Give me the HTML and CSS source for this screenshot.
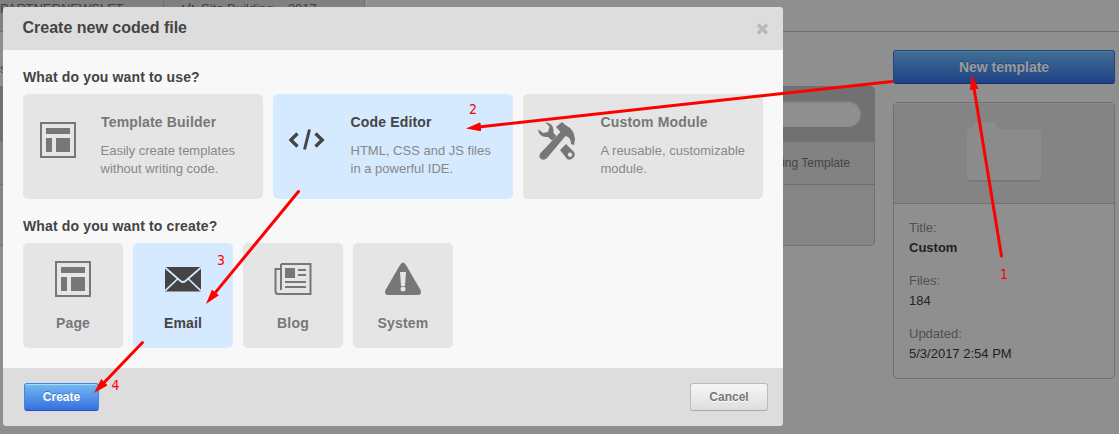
FILE: index.html
```html
<!DOCTYPE html>
<html lang="en">
<head>
<meta charset="utf-8">
<title>Create new coded file</title>
<link rel="stylesheet" href="styles.css">
</head>
<body>
<div class="page">
  <div class="tabbar">
    <div class="tab tab-first">PARTNERNEWSLET</div>
    <div class="tab"><svg width="16" height="12" viewBox="0 0 16 12"><path d="M4 2 1 6l3 4M10 0 6 12M12 2l3 4-3 4" fill="none" stroke="#454545" stroke-width="1.5"/></svg>Site Building – 2017</div>
  </div>
  <div class="workspace">
    <main class="files">
      <div class="crumb">s</div>
      <div class="panel">
        <div class="panel-search"><div class="search"></div></div>
        <div class="panel-row">Existing Template</div>
        <div class="panel-rest"></div>
      </div>
    </main>
    <aside class="side">
      <button class="new-btn">New template</button>
      <div class="info">
        <div class="thumb">
          <svg width="78" height="62" viewBox="0 0 78 62"><path d="M2 10q0-2 2-2h3l4-7h18l5 7h40q2 0 2 2v48q0 2-2 2H4q-2 0-2-2z" fill="#797979"/><path d="M2 9q0-2 2-2h3l4-7h18l5 7h40q2 0 2 2v47q0 2-2 2H4q-2 0-2-2z" fill="#8b8b8b"/></svg>
        </div>
        <dl class="meta">
          <div><dt>Title:</dt><dd class="strong">Custom</dd></div>
          <div><dt>Files:</dt><dd>184</dd></div>
          <div><dt>Updated:</dt><dd>5/3/2017 2:54 PM</dd></div>
        </dl>
      </div>
    </aside>
  </div>
</div>

<section class="modal">
  <header class="modal-head">
    <h1>Create new coded file</h1>
    <svg class="close" width="13" height="14" viewBox="0 0 13 14"><path d="M2 2.500l9 9M11 2.500l-9 9" stroke="#b9b9b9" stroke-width="3.400"/></svg>
  </header>
  <div class="modal-body">
    <h2>What do you want to use?</h2>
    <div class="cards">
      <div class="card wide">
        <svg class="icon page-icon" width="36" height="36" viewBox="0 0 36 36"><path d="M1 1h34v34H1z" fill="none" stroke="#777" stroke-width="2"/><path d="M6 6h24v6H6zM6 16h6v14H6zM16 16h14v14H16z" fill="#777"/></svg>
        <div class="first"><h3>Template Builder</h3><p>Easily create templates<br>without writing code.</p></div>
      </div>
      <div class="card wide selected">
        <svg class="icon" width="36" height="36" viewBox="0 0 36 36"><path d="M8.500 11.500 1.800 18 8.500 24.500M26.500 11.500l6.700 6.500-6.700 6.500" fill="none" stroke="#444" stroke-width="3.400"/><path d="M20.500 7.500 15.500 27.500" stroke="#444" stroke-width="3"/></svg>
        <div><h3>Code Editor</h3><p>HTML, CSS and JS files<br>in a powerful IDE.</p></div>
      </div>
      <div class="card wide">
        <svg class="icon tools" width="38" height="38" viewBox="0 0 38 38"><g fill="#777"><path d="M7 0Q15 1 15.500 8v3l3 3-4.500 4.500-4-3.500Q1 16 0 7l5 4 5-1 1.500-5.500z"/><path fill-rule="evenodd" d="M28 22l8 8q2 3-1 6t-6 1l-7-9zM32 30.500a2.200 2.200 0 1 0 .1 0z"/><path d="M18 5 24 0l4 3.500Q36 7 37 17l-1 6-3-1Q33 15 27.500 14L9 36q-3 3-6 1t-.5-6L22.500 10z"/></g></svg>
        <div><h3>Custom Module</h3><p>A reusable, customizable<br>module.</p></div>
      </div>
    </div>
    <h2>What do you want to create?</h2>
    <div class="cards">
      <div class="card small">
        <svg width="36" height="36" viewBox="0 0 36 36"><path d="M1 1h34v34H1z" fill="none" stroke="#777" stroke-width="2"/><path d="M6 6h24v6H6zM6 16h6v14H6zM16 16h14v14H16z" fill="#777"/></svg>
        <h3>Page</h3>
      </div>
      <div class="card small selected">
        <svg width="36" height="36" viewBox="0 0 36 36"><path d="M0 6h36v24.500H0z" fill="#444"/><path d="M0 6.500 15.500 20q2.500 2 5 0L36 6.500M0 30l12.500-12M36 30 23.500 18" fill="none" stroke="#d5e9ff" stroke-width="1.700"/></svg>
        <h3>Email</h3>
      </div>
      <div class="card small">
        <svg width="38" height="36" viewBox="0 0 38 36"><path d="M7 3h29.500v30H4Q1.500 33 1.500 30V8H7M7 3v26" fill="none" stroke="#777" stroke-width="2"/><path d="M11 7h10v10H11z" fill="#777"/><path d="M24 9h8M24 14h8M11 21h21M11 26h21" stroke="#777" stroke-width="2"/></svg>
        <h3>Blog</h3>
      </div>
      <div class="card small">
        <svg width="36" height="36" viewBox="0 0 36 36"><path d="M15 4q3-5 6 0l14.500 25q1.500 5-2.500 5H3q-4 0-2.500-5z" fill="#777"/><path d="M15 11h6l-1 14h-4z" fill="#e5e5e5"/><circle cx="18" cy="28" r="2.500" fill="#e5e5e5"/></svg>
        <h3>System</h3>
      </div>
    </div>
  </div>
  <footer class="modal-foot">
    <button class="btn primary">Create</button>
    <button class="btn">Cancel</button>
  </footer>
</section>

<svg class="notes" width="1119" height="434" viewBox="0 0 1119 434">
  <defs><marker id="head" markerUnits="userSpaceOnUse" markerWidth="16" markerHeight="10" refX="0" refY="4.500" orient="auto"><path d="M0 0 15 4.500 0 9z" fill="#f00"/></marker></defs>
  <g stroke="#f00" stroke-width="3" stroke-linecap="round">
    <path d="M1001.500 256 974.200 89.500" marker-end="url(#head)"/>
    <path d="M892 81.500 480.900 126.800" marker-end="url(#head)"/>
    <path d="M298.500 191.500 215.500 292.400" marker-end="url(#head)"/>
    <path d="M142.500 342.500 104.400 382.200" marker-end="url(#head)"/>
  </g>
  <g class="digits">
    <text x="1000" y="279" textLength="8" lengthAdjust="spacingAndGlyphs">1</text>
    <text x="469" y="114" textLength="8" lengthAdjust="spacingAndGlyphs">2</text>
    <text x="217" y="265" textLength="8" lengthAdjust="spacingAndGlyphs">3</text>
    <text x="111.500" y="390" textLength="8" lengthAdjust="spacingAndGlyphs">4</text>
  </g>
</svg>
</body>
</html>
```
FILE: styles.css
```css
* { box-sizing: border-box; }
body {
  margin: 0;
  width: 1119px;
  height: 434px;
  overflow: hidden;
  position: relative;
  background: #8f8f8f;
  font: 13px/18px "Liberation Sans", Arial, sans-serif;
  color: #444;
}
h1, h2, h3, p, dl, dd { margin: 0; }
button { font-family: inherit; }

/* dimmed page under the dialog */
.tabbar {
  display: flex;
  height: 32px;
  border-bottom: 1px solid #6f6f6f;
}
.tab {
  display: flex;
  align-items: flex-start;
  gap: 5px;
  width: 201px;
  padding: 0 0 0 16px;
  background: #808080;
  border-right: 1px solid #6f6f6f;
  color: #3f3f3f;
}
.tab svg { margin-top: 3px; }
.tab-first { width: 164px; padding-left: 0; }
.workspace { display: flex; justify-content: space-between; padding-right: 4px; }
.files { width: 875px; padding-top: 28px; }
.crumb { height: 26px; color: #664327; }
.panel {
  height: 160px;
  border: 1px solid #6f6f6f;
  border-left: 0;
  border-radius: 0 5px 5px 0;
  background: #858585;
  overflow: hidden;
}
.panel-search { display: flex; justify-content: flex-end; height: 55px; padding: 14px 13px 0 0; background: #717171; }
.search { width: 600px; height: 26px; border-radius: 13px; background: #8f8f8f; box-shadow: inset 0 1px 2px #777; }
.panel-row {
  height: 43px;
  padding-right: 24px;
  border-bottom: 1px solid #6f6f6f;
  background: #828282;
  font-size: 12px;
  line-height: 42px;
  text-align: right;
}
.side { width: 222px; padding-top: 18px; }
.new-btn {
  display: block;
  width: 100%;
  height: 34px;
  padding: 0;
  border: 1px solid #1c4684;
  border-bottom-color: #112e78;
  border-radius: 3px;
  background: linear-gradient(#426f93, #1e4185);
  box-shadow: inset 0 1px 0 #4f7f9b;
  color: #9b9b9b;
  font-size: 14px;
  font-weight: bold;
  text-shadow: 0 -1px 0 #20447c;
}
.info { height: 277px; margin-top: 18px; border: 1px solid #6f6f6f; border-radius: 4px; }
.thumb {
  display: flex;
  justify-content: center;
  height: 101px;
  padding-top: 19px;
  border-bottom: 1px solid #6f6f6f;
  background: #848484;
  box-shadow: inset 0 1px 0 #8b8b8b;
}
.meta { display: flex; flex-direction: column; gap: 13px; padding: 14px 15px; line-height: 20px; }
.meta dt { color: #505050; }
.meta dd { color: #222; }
.meta .strong { font-weight: bold; }

/* dialog */
.modal {
  position: absolute;
  left: 3px;
  top: 7px;
  width: 780px;
  height: 419px;
  display: flex;
  flex-direction: column;
  border-radius: 4px;
  overflow: hidden;
  background: #f8f8f8;
}
.modal-head {
  display: flex;
  justify-content: space-between;
  align-items: center;
  height: 43px;
  padding: 0 14px 2px 19.5px;
  background: #ddd;
}
.modal-head h1 { font-size: 16px; line-height: 20px; }
.close { margin-top: 2px; }
.modal-body { flex: 1; padding: 18px 20px 0 20px; }
.modal-body h2 { height: 26px; font-size: 14px; line-height: 18px; letter-spacing: .14px; }
.cards { display: flex; gap: 10px; margin-bottom: 18px; }
.card { height: 105px; border-radius: 5px; background: #e5e5e5; color: #777; }
.card h3 { font-size: 14px; line-height: 18px; letter-spacing: .17px; }
.wide { display: flex; width: 240px; padding: 19px 2.5px 0 16px; }
.wide .icon { margin-top: 9px; }
.wide .page-icon { margin-left: 1px; }
.wide .tools { margin-left: -1px; }
.wide > div { width: 160px; margin-left: auto; }
.wide > .first h3 { padding-left: .5px; }
.wide p { margin-top: 11px; color: #888; }
.small { display: flex; flex-direction: column; align-items: center; width: 100px; padding-top: 18px; }
.small h3 { margin-top: 17px; }
.selected { background: #d5e9ff; color: #444; }
.modal-foot {
  display: flex;
  justify-content: space-between;
  height: 58px;
  padding: 15px 15px 0 21px;
  background: #ddd;
}
.btn {
  width: 78px;
  height: 28px;
  padding: 0;
  border: 1px solid #bbb;
  border-bottom-color: #aaa;
  border-radius: 3px;
  background: linear-gradient(#f7f7f7, #dedede);
  color: #777;
  font-size: 12px;
  font-weight: bold;
  text-shadow: 0 1px 0 #fff;
}
.primary {
  width: 75px;
  border-color: #3e88dc;
  border-bottom-color: #2250c8;
  background: linear-gradient(#75baf3, #366fdd);
  box-shadow: inset 0 1px 0 #a2dcfa;
  color: #fff;
  text-shadow: 0 -1px 0 #3d78cf;
}

/* walkthrough arrows over the screen */
.notes { position: absolute; left: 0; top: 0; }
.digits { fill: #f00; font: 14px "DejaVu Sans", sans-serif; }
```
